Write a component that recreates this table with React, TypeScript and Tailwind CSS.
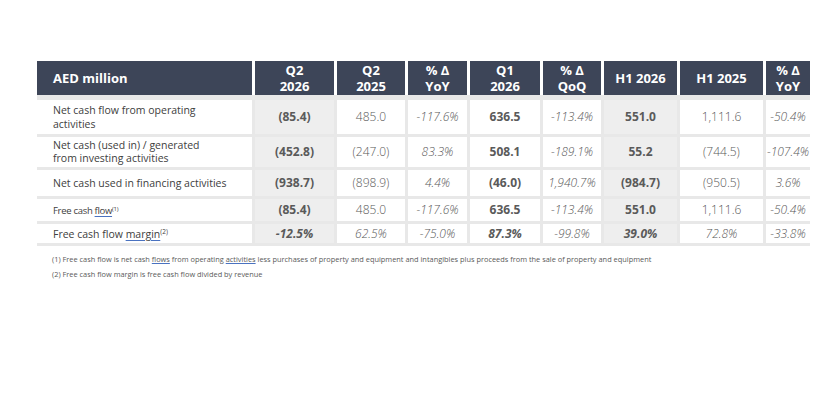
import React from "react";

type Cell = { v: string; b?: boolean; i?: boolean };

const two = (a: string, b: string) => (
  <div className="flex flex-col items-center">
    <div className="leading-[16px]">{a}</div>
    <div className="leading-[16px]">{b}</div>
  </div>
);

const heads: React.ReactNode[] = [
  <span className="pl-[16px] text-left w-full block">AED million</span>,
  two("Q2", "2026"),
  two("Q2", "2025"),
  two("% Δ", "YoY"),
  two("Q1", "2026"),
  two("% Δ", "QoQ"),
  <>H1 2026</>,
  <>H1 2025</>,
  two("% Δ", "YoY"),
];

const rows: { label: React.ReactNode; lcls: string; vcls: string; cells: Cell[] }[] = [
  {
    label: <>Net cash flow from operating<br />activities</>,
    lcls: "text-[10.5px] leading-[14px]",
    vcls: "text-[12px]",
    cells: [
      { v: "(85.4)", b: true }, { v: "485.0" }, { v: "-117.6%", i: true }, { v: "636.5", b: true },
      { v: "-113.4%", i: true }, { v: "551.0", b: true }, { v: "1,111.6" }, { v: "-50.4%", i: true },
    ],
  },
  {
    label: <>Net cash (used in) / generated<br />from investing activities</>,
    lcls: "text-[10.5px] leading-[13px]",
    vcls: "text-[12px]",
    cells: [
      { v: "(452.8)", b: true }, { v: "(247.0)" }, { v: "83.3%", i: true }, { v: "508.1", b: true },
      { v: "-189.1%", i: true }, { v: "55.2", b: true }, { v: "(744.5)" }, { v: "-107.4%", i: true },
    ],
  },
  {
    label: <>Net cash used in financing activities</>,
    lcls: "text-[10.5px] leading-[14px]",
    vcls: "text-[12px]",
    cells: [
      { v: "(938.7)", b: true }, { v: "(898.9)" }, { v: "4.4%", i: true }, { v: "(46.0)", b: true },
      { v: "1,940.7%", i: true }, { v: "(984.7)", b: true }, { v: "(950.5)" }, { v: "3.6%", i: true },
    ],
  },
  {
    label: (
      <span className="text-[9.5px] tracking-[-0.3px]">
        Free cash <span className="underline decoration-[#4a72c0] underline-offset-2">flow</span>
        <sup className="text-[6px]">(1)</sup>
      </span>
    ),
    lcls: "text-[10px] leading-[14px]",
    vcls: "text-[12px]",
    cells: [
      { v: "(85.4)", b: true }, { v: "485.0" }, { v: "-117.6%", i: true }, { v: "636.5", b: true },
      { v: "-113.4%", i: true }, { v: "551.0", b: true }, { v: "1,111.6" }, { v: "-50.4%", i: true },
    ],
  },
  {
    label: (
      <>
        Free cash flow <span className="underline decoration-[#4a72c0] underline-offset-2">margin</span>
        <sup className="text-[6.5px]">(2)</sup>
      </>
    ),
    lcls: "text-[10.5px] leading-[14px]",
    vcls: "text-[12px]",
    cells: [
      { v: "-12.5%", b: true, i: true }, { v: "62.5%", i: true }, { v: "-75.0%", i: true }, { v: "87.3%", b: true, i: true },
      { v: "-99.8%", i: true }, { v: "39.0%", b: true, i: true }, { v: "72.8%", i: true }, { v: "-33.8%", i: true },
    ],
  },
];

const cols = "grid-cols-[215px_79px_68px_59px_70px_58px_73px_83px_44px]";

export default function App() {
  return (
    <div
      className="w-[838px] h-[412px] bg-white overflow-hidden pt-[61px] pl-[37px]"
      style={{ fontFamily: '"Open Sans", "Noto Sans", sans-serif' }}
    >
      <div className="w-[773px]">
        <div className={`grid ${cols} gap-x-[3px] bg-white`}>
          {heads.map((h, i) => (
            <div
              key={i}
              className="h-[34px] bg-[#3d4558] text-white font-bold text-[13px] leading-[16px] flex items-center justify-center text-center"
            >
              {h}
            </div>
          ))}
        </div>
        <div
          className={`grid ${cols} grid-rows-[34px_30px_26px_22px_19px] gap-[3px] bg-[#e8e8e8] pt-[5px] pb-[3px]`}
        >
          {rows.map((r, ri) => (
            <React.Fragment key={ri}>
              <div className={`bg-white flex items-center pl-[16px] text-[#404040] ${r.lcls}`}>
                <div>{r.label}</div>
              </div>
              {r.cells.map((c, ci) => {
                const gray = ci === 0 || ci === 5;
                return (
                  <div
                    key={ci}
                    className={`${gray ? "bg-[#eeeeee]" : "bg-white"} flex items-center justify-center ${r.vcls} ${
                      c.b ? "font-bold text-[#5a5a5a]" : "font-light text-[#595959]"
                    } ${c.i ? "italic" : ""}`}
                  >
                    {c.v}
                  </div>
                );
              })}
            </React.Fragment>
          ))}
        </div>
        <div className="mt-[6px] pl-[15px] text-[7.4px] leading-[15px] text-[#5a5a5a]">
          <div>
            (1) Free cash flow is net cash{" "}
            <span className="underline decoration-[#4a72c0]">flows</span> from operating{" "}
            <span className="underline decoration-[#4a72c0]">activities</span> less purchases of property and
            equipment and intangibles plus proceeds from the sale of property and equipment
          </div>
          <div>(2) Free cash flow margin is free cash flow divided by revenue</div>
        </div>
      </div>
    </div>
  );
}
